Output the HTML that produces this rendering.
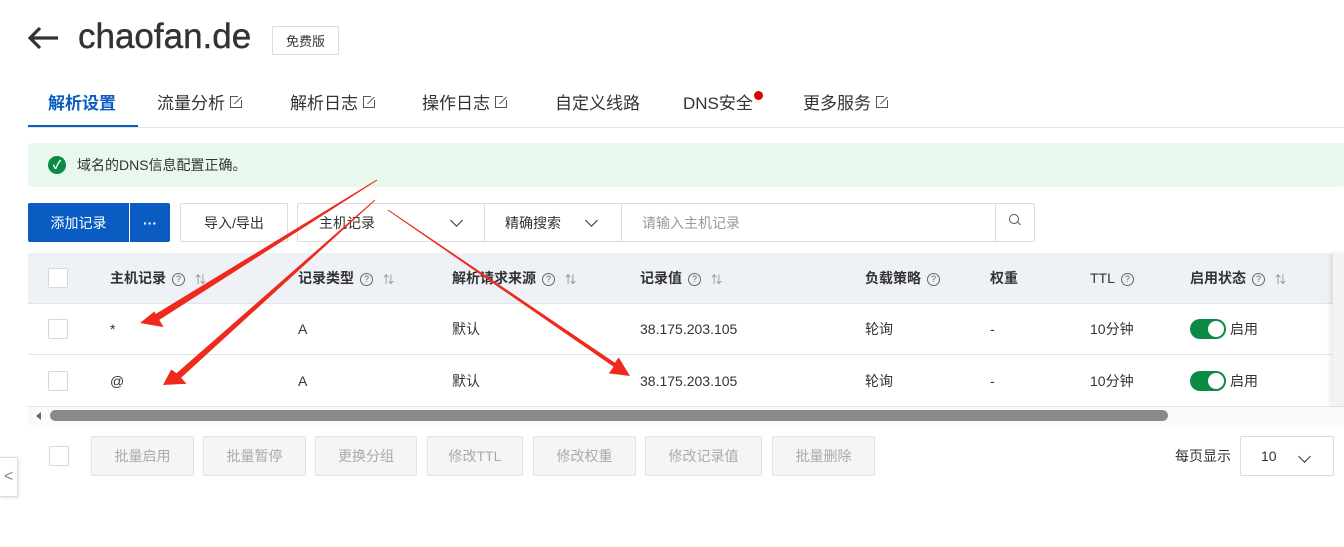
<!DOCTYPE html>
<html><head><meta charset="utf-8"><style>
*{margin:0;padding:0;box-sizing:border-box}
body{width:1344px;height:547px;overflow:hidden;background:#fff;font-family:"Liberation Sans","Noto Sans CJK SC",sans-serif;color:#333;font-size:14px;position:relative}
.a{position:absolute;white-space:nowrap}
.btn{position:absolute;border:1px solid #dcdcdc;border-radius:2px;background:#fff;display:flex;align-items:center;justify-content:center;font-size:14px;color:#333}
.dis{background:#f5f5f5;border-color:#e3e3e3;color:#aaa}
.cb{position:absolute;width:20px;height:20px;border:1px solid #d8d8d8;border-radius:2px;background:#fff}
.th{position:absolute;top:268px;line-height:20px;font-weight:bold;font-size:14px;color:#333;white-space:nowrap}
.q{display:inline-block;width:13px;height:13px;border:1px solid #666;border-radius:50%;font-size:9px;line-height:11px;text-align:center;font-weight:normal;margin-left:6px;vertical-align:1px;color:#666}
.s{font-weight:normal;color:#888;margin-left:10px;font-size:11px}
.td{position:absolute;font-size:14px;line-height:20px;color:#333;white-space:nowrap}
.tab{position:absolute;top:92px;line-height:24px;font-size:17px;color:#333}
.ext{display:inline-block;width:12px;height:12px;border:1.3px solid #555;margin-left:5px;vertical-align:1px;position:relative}
.ext:after{content:"";position:absolute;right:-3px;top:-3px;width:6px;height:6px;background:#fff}
.ext:before{content:"";position:absolute;right:-2px;top:3px;width:10px;height:1.3px;background:#555;transform:rotate(-45deg);z-index:1}
.tg{position:absolute;width:36px;height:20px;border-radius:10px;background:#0b8a44}
.tg:after{content:"";position:absolute;right:2px;top:2px;width:16px;height:16px;border-radius:50%;background:#fff}
.chev{display:inline-block;width:9px;height:9px;border-right:1.6px solid #333;border-bottom:1.6px solid #333;transform:rotate(45deg)}
</style></head><body>
<svg style="position:absolute;left:28px;top:26px" width="32" height="24"><path d="M2 12H30M12 2L2 12L12 22" fill="none" stroke="#333" stroke-width="3.2"/></svg>
<div class="a" style="left:78px;top:15px;font-size:35px;line-height:44px;color:#333;-webkit-text-stroke:0.4px #333">chaofan.de</div>
<div class="btn" style="left:272px;top:26px;width:67px;height:29px;font-size:13px">免费版</div>

<div class="tab" style="left:48px;color:#0a5cc2;font-weight:bold">解析设置</div>
<div style="position:absolute;left:28px;top:125px;width:110px;height:3px;background:#0a5cc2"></div>
<div style="position:absolute;left:28px;top:127px;width:1316px;height:1px;background:#e4e4e4"></div>
<div class="tab" style="left:157px">流量分析<span class="ext"></span></div>
<div class="tab" style="left:290px">解析日志<span class="ext"></span></div>
<div class="tab" style="left:422px">操作日志<span class="ext"></span></div>
<div class="tab" style="left:555px">自定义线路</div>
<div class="tab" style="left:683px">DNS安全</div>
<div class="a" style="left:754px;top:91px;width:9px;height:9px;border-radius:50%;background:#d90000"></div>
<div class="tab" style="left:803px">更多服务<span class="ext"></span></div>

<div style="position:absolute;left:28px;top:143px;width:1316px;height:44px;background:#e9f8ed;border-radius:3px"></div>
<div class="a" style="left:48px;top:156px;width:18px;height:18px;border-radius:50%;background:#0b8a44;color:#fff;font-size:12px;line-height:18px;text-align:center;font-weight:bold">✓</div>
<div class="a" style="left:77px;top:155px;line-height:20px;font-size:14px">域名的DNS信息配置正确。</div>

<div class="btn" style="left:28px;top:203px;width:101px;height:39px;background:#0a5cc2;border-color:#0a5cc2;color:#fff;border-radius:2px 0 0 2px">添加记录</div>
<div class="btn" style="left:130px;top:203px;width:40px;height:39px;background:#0a5cc2;border-color:#0a5cc2;color:#fff;font-weight:bold;border-radius:0 2px 2px 0">···</div>
<div class="btn" style="left:180px;top:203px;width:108px;height:39px">导入/导出</div>
<div class="btn" style="left:297px;top:203px;width:738px;height:39px"></div>
<div class="a" style="left:319px;top:213px;line-height:20px">主机记录</div>
<div class="a" style="left:452px;top:212px"><span class="chev"></span></div>
<div style="position:absolute;left:484px;top:204px;width:1px;height:37px;background:#dcdcdc"></div>
<div class="a" style="left:505px;top:213px;line-height:20px">精确搜索</div>
<div class="a" style="left:587px;top:212px"><span class="chev"></span></div>
<div style="position:absolute;left:621px;top:204px;width:1px;height:37px;background:#dcdcdc"></div>
<div class="a" style="left:642px;top:213px;line-height:20px;color:#999">请输入主机记录</div>
<div style="position:absolute;left:995px;top:204px;width:1px;height:37px;background:#dcdcdc"></div>
<div class="a" style="left:1009px;top:214px;width:10px;height:10px;border:1.3px solid #555;border-radius:50%"></div>
<div class="a" style="left:1017px;top:223px;width:4px;height:1.3px;background:#555;transform:rotate(45deg)"></div>

<div style="position:absolute;left:28px;top:253px;width:1316px;height:50px;background:#eef1f6"></div>
<div style="position:absolute;left:28px;top:303px;width:1316px;height:1px;background:#e3e3e3"></div>
<div style="position:absolute;left:28px;top:354px;width:1316px;height:1px;background:#e3e3e3"></div>
<div style="position:absolute;left:28px;top:406px;width:1316px;height:1px;background:#e3e3e3"></div>
<div style="position:absolute;left:1333px;top:253px;width:11px;height:153px;background:#f3f3f3;box-shadow:-3px 0 5px rgba(0,0,0,.08)"></div>
<div class="cb" style="left:48px;top:268px"></div>
<div class="cb" style="left:48px;top:319px"></div>
<div class="cb" style="left:48px;top:371px"></div>
<div class="th" style="left:110px">主机记录<span class="q">?</span><span class="s">⇅</span></div>
<div class="th" style="left:298px">记录类型<span class="q">?</span><span class="s">⇅</span></div>
<div class="th" style="left:452px">解析请求来源<span class="q">?</span><span class="s">⇅</span></div>
<div class="th" style="left:640px">记录值<span class="q">?</span><span class="s">⇅</span></div>
<div class="th" style="left:865px">负载策略<span class="q">?</span></div>
<div class="th" style="left:990px">权重</div>
<div class="th" style="left:1090px;font-weight:normal">TTL<span class="q">?</span></div>
<div class="th" style="left:1190px">启用状态<span class="q">?</span><span class="s">⇅</span></div>

<div class="td" style="left:110px;top:319px">*</div>
<div class="td" style="left:298px;top:319px">A</div>
<div class="td" style="left:452px;top:319px">默认</div>
<div class="td" style="left:640px;top:319px">38.175.203.105</div>
<div class="td" style="left:865px;top:319px">轮询</div>
<div class="td" style="left:990px;top:319px">-</div>
<div class="td" style="left:1090px;top:319px">10分钟</div>
<div class="tg" style="left:1190px;top:319px"></div>
<div class="td" style="left:1230px;top:319px">启用</div>

<div class="td" style="left:110px;top:371px">@</div>
<div class="td" style="left:298px;top:371px">A</div>
<div class="td" style="left:452px;top:371px">默认</div>
<div class="td" style="left:640px;top:371px">38.175.203.105</div>
<div class="td" style="left:865px;top:371px">轮询</div>
<div class="td" style="left:990px;top:371px">-</div>
<div class="td" style="left:1090px;top:371px">10分钟</div>
<div class="tg" style="left:1190px;top:371px"></div>
<div class="td" style="left:1230px;top:371px">启用</div>

<div style="position:absolute;left:28px;top:407px;width:1316px;height:18px;background:#fafafa"></div>
<div class="a" style="left:36px;top:412px;width:0;height:0;border-top:4px solid transparent;border-bottom:4px solid transparent;border-right:5px solid #666"></div>
<div style="position:absolute;left:50px;top:410px;width:1118px;height:11px;border-radius:6px;background:#8a8a8a"></div>

<div class="cb" style="left:49px;top:446px"></div>
<div class="btn dis" style="left:91px;top:436px;width:103px;height:40px">批量启用</div>
<div class="btn dis" style="left:203px;top:436px;width:103px;height:40px">批量暂停</div>
<div class="btn dis" style="left:315px;top:436px;width:102px;height:40px">更换分组</div>
<div class="btn dis" style="left:427px;top:436px;width:96px;height:40px">修改TTL</div>
<div class="btn dis" style="left:533px;top:436px;width:103px;height:40px">修改权重</div>
<div class="btn dis" style="left:645px;top:436px;width:117px;height:40px">修改记录值</div>
<div class="btn dis" style="left:772px;top:436px;width:103px;height:40px">批量删除</div>
<div class="a" style="left:1175px;top:446px;line-height:20px">每页显示</div>
<div class="btn" style="left:1240px;top:436px;width:94px;height:40px;justify-content:flex-start;padding-left:20px">10</div>
<div class="a" style="left:1300px;top:448px"><span class="chev"></span></div>
<div style="position:absolute;left:0;top:457px;width:18px;height:40px;background:#fff;border:1px solid #ddd;border-left:none;box-shadow:1px 1px 3px rgba(0,0,0,.12);color:#888;font-size:16px;line-height:38px;text-align:center">&lt;</div>

<svg style="position:absolute;left:0;top:0" width="1344" height="547">
<g fill="#ee2a1e">
<polygon points="377.3,180.4 159.3,319.9 163.6,327.1 140,323 154.3,311.5 155.8,313.9 376.7,179.6"/>
<polygon points="375.3,200.4 181.1,377.8 186.6,383.8 163,385 171.2,369.5 176.5,373.2 374.7,199.6"/>
<polygon points="387.7,210.4 613.6,366.7 608.8,373.4 630,376 618.7,357.4 614.9,362.8 388.3,209.6"/>
</g></svg>
</body></html>
